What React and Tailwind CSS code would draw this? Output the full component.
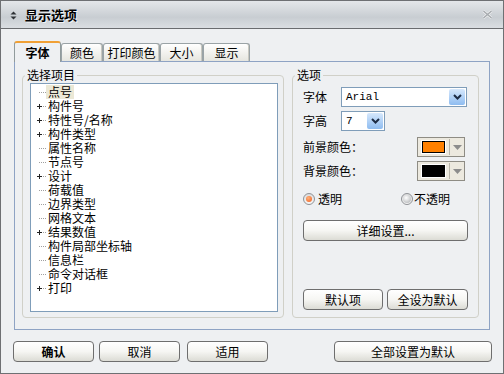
const treeItems = [
  { label: '点号', selected: true },
  { label: '构件号', plus: true },
  { label: '特性号/名称', plus: true },
  { label: '构件类型', plus: true },
  { label: '属性名称' },
  { label: '节点号' },
  { label: '设计', plus: true },
  { label: '荷载值' },
  { label: '边界类型' },
  { label: '网格文本' },
  { label: '结果数值', plus: true },
  { label: '构件局部坐标轴' },
  { label: '信息栏' },
  { label: '命令对话框' },
  { label: '打印', plus: true },
]

const tabs = [
  { label: '字体', w: 'w-[47px]', active: true },
  { label: '颜色', w: 'w-[42px]' },
  { label: '打印颜色', w: 'w-[57px]' },
  { label: '大小', w: 'w-[43px]' },
  { label: '显示', w: 'w-[47px]' },
]

function Btn({ children, className = '', bold = false }) {
  return (
    <div
      className={`flex items-center justify-center rounded-[4px] border border-[#6e6e6e] bg-gradient-to-b from-white via-[#f6f6f3] to-[#dcdcd5] text-[12px] leading-[14px] text-black ${bold ? 'font-bold' : ''} ${className}`}
    >
      {children}
    </div>
  )
}

function GroupBox({ title, className = '', children }) {
  return (
    <div className={`relative rounded-[4px] border border-[#d0d0c8] ${className}`}>
      <span className="absolute -top-[8px] left-[2px] block h-[14px] bg-[#eef0f2] px-[2px] text-[12px] leading-[14px] text-black">
        {title}
      </span>
      {children}
    </div>
  )
}

function Select({ value, className = '' }) {
  return (
    <div className={`flex h-[20px] items-center border border-[#7f9db9] bg-white ${className}`}>
      <span className="flex-1 pl-[4px] font-['Liberation_Mono',monospace] text-[11px] leading-[12px] text-black">
        {value}
      </span>
      <div className="m-px flex h-[16px] w-[16px] items-center justify-center rounded-[2px] bg-gradient-to-b from-[#d6e8fc] to-[#8ebcf0]">
        <svg width="9" height="6" viewBox="0 0 9 6">
          <path d="M1 1 L4.5 4.5 L8 1" stroke="#1d2c45" strokeWidth="2" fill="none" />
        </svg>
      </div>
    </div>
  )
}

function ColorBtn({ swatch }) {
  return (
    <div className="flex h-[20px] w-[48px] items-center border border-[#8e8c84] bg-[#ece9df]">
      <div className="ml-[3px] border border-white">
        <div className={`h-[12px] w-[23px] border border-black ${swatch}`} />
      </div>
      <div className="ml-[3px] h-[16px] w-px bg-[#b8b5aa]" />
      <div className="flex flex-1 items-center justify-center">
        <svg width="9" height="5" viewBox="0 0 9 5">
          <path d="M0 0 L9 0 L4.5 5 Z" fill="#8c8c8c" />
        </svg>
      </div>
    </div>
  )
}

function Radio({ checked }) {
  return (
    <div className="flex h-[12px] w-[12px] shrink-0 items-center justify-center rounded-full border border-[#8f9296] bg-gradient-to-b from-[#dcdcdc] to-[#f7f7f7]">
      {checked ? (
        <div className="h-[6px] w-[6px] rounded-full bg-[radial-gradient(circle_at_40%_35%,#ffb27a,#ef5b1c)]" />
      ) : (
        <div className="h-[8px] w-[8px] rounded-full bg-[radial-gradient(circle_at_40%_35%,#ffffff,#a9acaf)]" />
      )}
    </div>
  )
}

function TreeRow({ item }) {
  return (
    <div className="flex h-[14px] items-center">
      <svg width="15" height="14" viewBox="0 0 15 14" className="shrink-0">
        {item.plus ? (
          <>
            <path d="M6 7.5 H11 M8.5 5 V10" stroke="#222" strokeWidth="1" />
            <path d="M12 7.5 H15" stroke="#a0a0a0" strokeWidth="1" strokeDasharray="1 1" />
          </>
        ) : (
          <path d="M8 7.5 H15" stroke="#a0a0a0" strokeWidth="1" strokeDasharray="1 1" />
        )}
      </svg>
      <span
        className={`block px-[2px] text-[12px] leading-[14px] text-black ${item.selected ? 'bg-[#ebe8d6]' : ''}`}
      >
        {item.label}
      </span>
    </div>
  )
}

export default function App() {
  return (
    <div className="flex h-[374px] w-[504px] flex-col border border-[#6e7073] bg-[#eef0f2] font-['Noto_Sans_CJK_SC','Liberation_Sans',sans-serif] text-black">
      {/* title bar */}
      <div className="flex h-[28px] shrink-0 items-center border-b border-[#6a6c6f] bg-[linear-gradient(to_bottom,#e4e7ea_0%,#d4d8dc_35%,#c8cdd2_60%,#dadee2_100%)] px-[9px]">
        <svg width="7" height="9" viewBox="0 0 7 9" className="mt-px">
          <path d="M0.5 3.5 L3.5 0.5 L6.5 3.5 Z" fill="#2f3236" />
          <path d="M0.5 5.5 L3.5 8.5 L6.5 5.5 Z" fill="#2f3236" />
        </svg>
        <span className="ml-[8px] text-[13px] font-bold leading-[15px] text-black [text-shadow:1px_1px_0_#f2f4f6]">
          显示选项
        </span>
        <div className="flex-1" />
        <svg width="11" height="9" viewBox="0 0 11 9" className="mr-[1px]">
          <path d="M1.5 1 L9.5 8 M9.5 1 L1.5 8" stroke="#f4f5f6" strokeWidth="2.6" />
          <path d="M1.5 1 L9.5 8 M9.5 1 L1.5 8" stroke="#a7abaf" strokeWidth="1.6" />
        </svg>
      </div>

      {/* body */}
      <div className="flex flex-1 flex-col pl-[13px] pt-[12px]">
        <div className="flex h-[20px] items-end">
          {tabs.map((t) =>
            t.active ? (
              <div
                key={t.label}
                className={`relative z-10 -mb-px flex h-[21px] items-center justify-center rounded-t-[3px] border-x border-t-[2px] border-x-[#919b9c] border-t-[#f0a035] bg-[#eef0f2] text-[12px] font-bold leading-[14px] ${t.w}`}
              >
                {t.label}
              </div>
            ) : (
              <div
                key={t.label}
                className={`flex h-[18px] items-center justify-center rounded-t-[3px] border-x border-t border-[#9aa3a6] bg-gradient-to-b from-white to-[#e6e6df] text-[12px] leading-[14px] shadow-[inset_-1px_0_0_#c8c8c0] ${t.w}`}
              >
                {t.label}
              </div>
            )
          )}
        </div>

        <div className="flex h-[269px] w-[476px] border border-[#8ea3c4] pl-[7px] pt-[13px]">
          <GroupBox title="选择项目" className="h-[243px] w-[262px] pl-[7px] pt-[7px]">
            <div className="h-[229px] w-[248px] border border-[#7f9db9] bg-white pt-px">
              {treeItems.map((it) => (
                <TreeRow key={it.label} item={it} />
              ))}
            </div>
          </GroupBox>

          <GroupBox title="选项" className="ml-[8px] flex h-[243px] w-[187px] flex-col pl-[10px] pt-[11px]">
            <div className="flex items-center">
              <span className="w-[38px] text-[12px] leading-[14px]">字体</span>
              <Select value="Arial" className="w-[126px]" />
            </div>
            <div className="mt-[4px] flex items-center">
              <span className="w-[38px] text-[12px] leading-[14px]">字高</span>
              <Select value="7" className="w-[44px]" />
            </div>
            <div className="mt-[6px] flex items-center justify-between pr-[13px]">
              <span className="text-[12px] leading-[14px]">前景颜色：</span>
              <ColorBtn swatch="bg-[#ff8000]" />
            </div>
            <div className="mt-[4px] flex items-center justify-between pr-[13px]">
              <span className="text-[12px] leading-[14px]">背景颜色：</span>
              <ColorBtn swatch="bg-black" />
            </div>
            <div className="mt-[11px] flex h-[14px] items-center">
              <Radio checked />
              <span className="ml-[3px] w-[83px] text-[12px] leading-[14px]">透明</span>
              <Radio />
              <span className="ml-[1px] text-[12px] leading-[14px]">不透明</span>
            </div>
            <Btn className="mt-[14px] h-[21px] w-[165px]">详细设置...</Btn>
            <div className="flex-1" />
            <div className="mb-[7px] flex gap-[4px]">
              <Btn className="h-[21px] w-[80px]">默认项</Btn>
              <Btn className="h-[21px] w-[81px]">全设为默认</Btn>
            </div>
          </GroupBox>
        </div>

        <div className="-ml-px mt-[11px] flex">
          <Btn bold className="h-[21px] w-[81px]">确认</Btn>
          <Btn className="ml-[5px] h-[21px] w-[81px]">取消</Btn>
          <Btn className="ml-[7px] h-[21px] w-[81px]">适用</Btn>
          <Btn className="ml-[66px] h-[21px] w-[158px]">全部设置为默认</Btn>
        </div>
      </div>
    </div>
  )
}
